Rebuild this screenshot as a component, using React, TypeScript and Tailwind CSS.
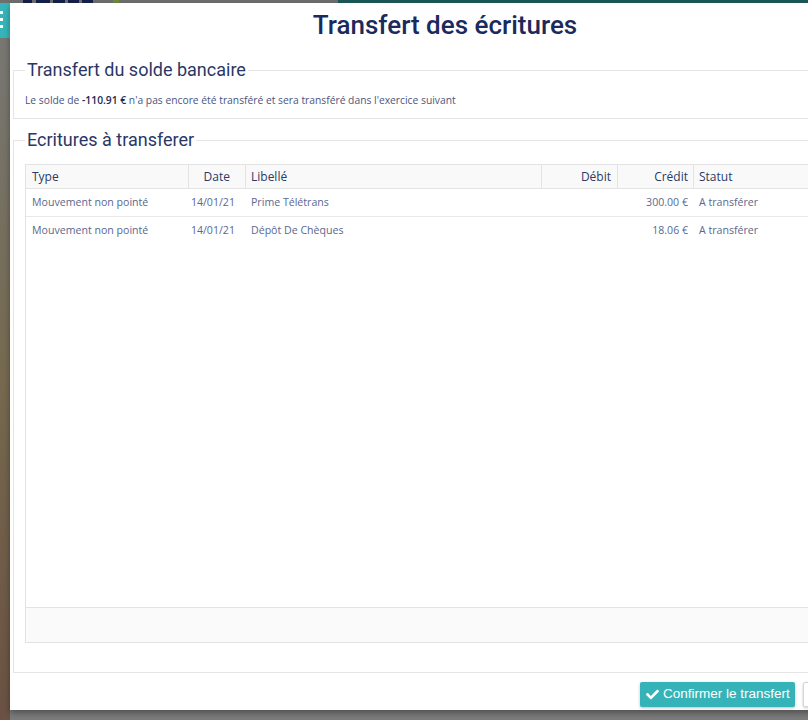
import React from "react";
import { FaCheck } from "react-icons/fa";

const rows = [
  { type: "Mouvement non pointé", date: "14/01/21", libelle: "Prime Télétrans", debit: "", credit: "300.00 €", statut: "A transférer" },
  { type: "Mouvement non pointé", date: "14/01/21", libelle: "Dépôt De Chèques", debit: "", credit: "18.06 €", statut: "A transférer" },
];

const grid = "grid grid-cols-[163px_57px_296px_76px_76px_1fr]";

export default function App() {
  return (
    <div className="w-[808px] h-[720px] overflow-hidden flex bg-[#7a7a7a] font-['Open_Sans',sans-serif]">
      {/* left strip */}
      <div className="w-[10px] shrink-0 flex flex-col">
        <div className="h-[3px] bg-[#6e6e6e]" />
        <div className="h-[35px] bg-[#35b5b9] flex flex-col gap-[4px] pt-[8px]">
          <div className="w-[3px] h-[3px] bg-white" />
          <div className="w-[3px] h-[3px] bg-white" />
          <div className="w-[3px] h-[3px] bg-white" />
        </div>
        <div className="flex-1 bg-linear-to-b from-[#777772] via-[#75694f] to-[#6a5143]" />
      </div>

      {/* main column */}
      <div className="w-[870px] shrink-0 flex flex-col">
        <div className="h-[3px] flex overflow-hidden bg-[#6e6e6e]">
          <div className="w-[13px]" />
          <div className="w-[9px] bg-[#15204a]" />
          <div className="w-[4px]" />
          <div className="w-[14px] bg-[#15204a]" />
          <div className="w-[3px]" />
          <div className="w-[12px] bg-[#15204a]" />
          <div className="w-[3px]" />
          <div className="w-[11px] bg-[#15204a]" />
          <div className="w-[3px]" />
          <div className="w-[11px] bg-[#15204a]" />
          <div className="w-[20px]" />
          <div className="w-[6px] bg-[#6f8a3a]" />
          <div className="w-[219px]" />
          <div className="flex-1 bg-[#1c5858]" />
        </div>

        <div className="h-[707px] bg-white flex flex-col shadow-[0_3px_6px_rgba(0,0,0,0.35)] relative">
          <h1 className="mt-[7px] text-center text-[26px] leading-[30px] font-medium text-[#1b2a5c] font-['Roboto',sans-serif]">
            Transfert des écritures
          </h1>

          <fieldset className="mt-[19px] mx-[3px] border border-[#e5e5e5] px-[11px] pt-[12px] pb-[11px]">
            <legend className="px-[2px] text-[18px] leading-[22px] text-[#2a3766] font-['Roboto',sans-serif]">
              Transfert du solde bancaire
            </legend>
            <p className="text-[10.3px] leading-[14px] text-[#4a5580]">
              Le solde de <span className="font-semibold text-[#1e2a55]">-110.91 €</span> n'a pas encore été transféré et sera transféré dans l'exercice suivant
            </p>
          </fieldset>

          <fieldset className="mt-[10px] mx-[3px] border border-[#e5e5e5] px-[11px] pt-[13px] pb-[29px]">
            <legend className="px-[2px] text-[18px] leading-[22px] text-[#2a3766] font-['Roboto',sans-serif]">
              Ecritures à transferer
            </legend>
            <div className="h-[479px] border border-[#e3e3e3] flex flex-col">
              <div className={`${grid} h-[24px] bg-[#f9f9f9] border-b border-[#e3e3e3] text-[12px] text-[#2b3a67]`}>
                <div className="pl-[6px] flex items-center border-r border-[#e3e3e3]">Type</div>
                <div className="pr-[15px] flex items-center justify-end border-r border-[#e3e3e3]">Date</div>
                <div className="pl-[5px] flex items-center border-r border-[#e3e3e3]">Libellé</div>
                <div className="pr-[6px] flex items-center justify-end border-r border-[#e3e3e3]">Débit</div>
                <div className="pr-[5px] flex items-center justify-end border-r border-[#e3e3e3]">Crédit</div>
                <div className="pl-[5px] flex items-center">Statut</div>
              </div>
              {rows.map((r, i) => (
                <div
                  key={i}
                  className={`${grid} h-[28px] text-[10.6px] text-[#5a6890] ${i < rows.length - 1 ? "border-b border-[#e8e8e8]" : ""}`}
                >
                  <div className="pl-[6px] flex items-center">{r.type}</div>
                  <div className="pr-[11px] flex items-center justify-end">{r.date}</div>
                  <div className="pl-[5px] flex items-center">{r.libelle}</div>
                  <div className="pr-[6px] flex items-center justify-end">{r.debit}</div>
                  <div className="pr-[6px] flex items-center justify-end">{r.credit}</div>
                  <div className="pl-[5px] flex items-center">{r.statut}</div>
                </div>
              ))}
              <div className="flex-1" />
              <div className="h-[35px] border-t border-[#e3e3e3] bg-[#fafafa]" />
            </div>
          </fieldset>

          <div className="flex justify-end gap-[8px] pt-[9px] pr-[7px]">
            <button className="h-[25px] w-[155px] flex items-center gap-[4px] pl-[6px] bg-[#35b3b8] rounded-[2px] text-white text-[13.5px] font-['Liberation_Sans',Arial,sans-serif] shadow-[0_1px_3px_rgba(0,0,0,0.25)]">
              <FaCheck className="w-[13px] h-[13px]" />
              <span>Confirmer le transfert</span>
            </button>
            <button className="h-[25px] w-[70px] flex items-center justify-center bg-white border border-[#d5d5d5] rounded-[2px] text-[#333] text-[13.5px] font-['Liberation_Sans',Arial,sans-serif] shadow-[0_1px_3px_rgba(0,0,0,0.2)]">
              Annuler
            </button>
          </div>
        </div>

        <div className="flex-1 bg-[#7b7b7b]" />
      </div>
    </div>
  );
}
